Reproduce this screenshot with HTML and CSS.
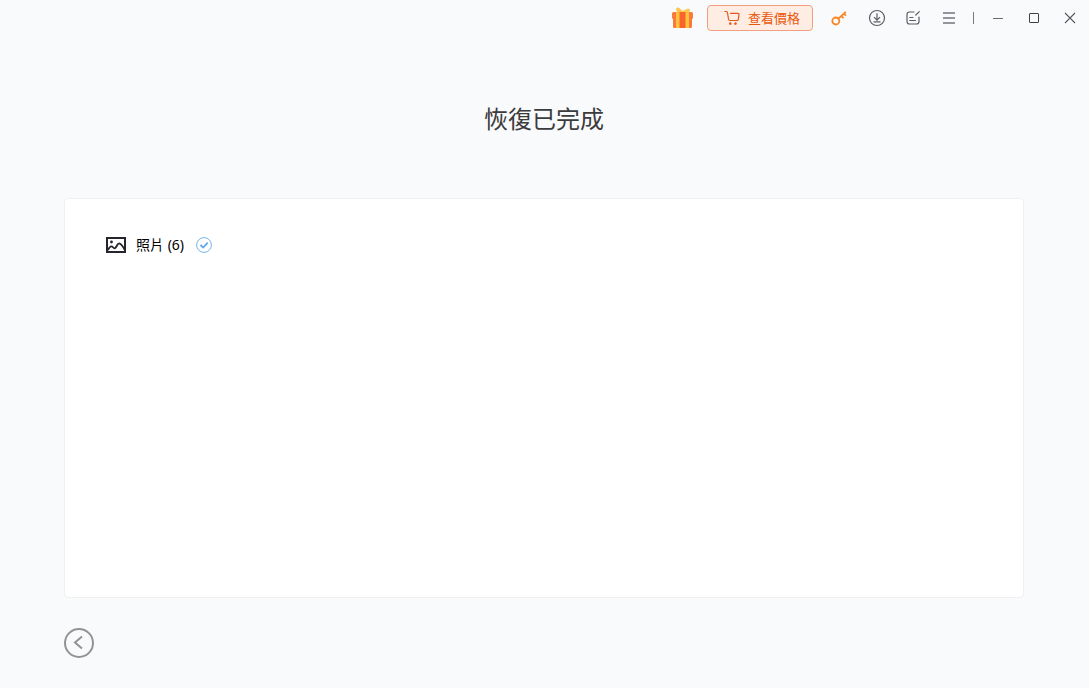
FILE: index.html
```html
<!DOCTYPE html>
<html lang="zh-Hant">
<head>
<meta charset="utf-8">
<meta name="viewport" content="width=device-width, initial-scale=1">
<title>恢復已完成</title>
<link rel="stylesheet" href="styles.css">
</head>
<body>
<div class="app">
  <header class="titlebar">
    <button class="tool gift" type="button" aria-label="Gift">
      <svg width="22" height="22" viewBox="0 0 22 22">
        <path d="M10 6C6 6.500 3.600 4.500 4.200 1.800C4.600 .2 6.400 0 7.500 1.200L10.500 4L15 2C17.300 1.200 18.600 2.600 17.800 4C16.800 5.600 14 6.500 10 6Z" fill="#ffc64a"/>
        <rect x="0" y="5" width="21" height="7" rx="1.500" fill="#fb7a3c"/>
        <rect x="1" y="10" width="19" height="11" rx="1.500" fill="#fa7a38"/>
        <path d="M7 5h7v16h-7z" fill="#f8642c"/>
        <path d="M4 5h3.500v16h-3.500zM13.500 5h3.500v16h-3.500z" fill="#ffc23e"/>
      </svg>
    </button>
    <button class="price" type="button">
      <svg width="16" height="16" viewBox="0 0 16 16" fill="none" stroke="#e4581c" stroke-width="1.200" stroke-linecap="round" stroke-linejoin="round">
        <path d="M.8 1.500H2.200Q3.200 1.500 3.400 2.500L4.600 9.500Q4.800 10.500 5.800 10.500H13.200Q14.200 10.500 14.300 9.500L15 4.300Q15 3.300 14 3.300H6.500"/>
        <circle cx="6.300" cy="13.600" r=".7" fill="#e4581c"/>
        <circle cx="11.500" cy="13.600" r=".7" fill="#e4581c"/>
      </svg>
      <span>查看價格</span>
    </button>
    <button class="tool key" type="button" aria-label="Key">
      <svg width="16" height="16" viewBox="0 0 16 16" fill="none" stroke="#fb8520" stroke-width="1.800">
        <circle cx="4.800" cy="11" r="3.500"/>
        <path d="M7.400 8.600L14.800 1.800M10.300 6L12.600 8.200M12.900 3.600L15 5.600"/>
      </svg>
    </button>
    <button class="tool" type="button" aria-label="Download">
      <svg width="18" height="18" viewBox="0 0 18 18" fill="none" stroke="#5a5d63" stroke-width="1.200">
        <circle cx="9" cy="9" r="7.500"/>
        <path d="M9 4.200V11M6 8.200L9 11.200L12 8.200M5.500 12.800H12.500"/>
      </svg>
    </button>
    <button class="tool" type="button" aria-label="Feedback">
      <svg width="16" height="16" viewBox="0 0 16 16" fill="none" stroke="#5a5d63" stroke-width="1.200" stroke-linecap="round">
        <path d="M9 2H4.500Q2 2 2 4.500V11.500Q2 14 4.500 14H11.500Q14 14 14 11.500V7M10.800 5L14.300 1.600M4.800 7.500H8M4.800 10.500H10.500"/>
      </svg>
    </button>
    <button class="tool" type="button" aria-label="Menu">
      <svg width="14" height="14" viewBox="0 0 14 14" fill="none" stroke="#73767b" stroke-width="1.400">
        <path d="M1 2H13M1 7H13M1 12H13"/>
      </svg>
    </button>
    <span class="divider"></span>
    <button class="tool" type="button" aria-label="Minimize">
      <svg width="12" height="12" viewBox="0 0 12 12" fill="none" stroke="#6a6c70"><path d="M1 6.500H11"/></svg>
    </button>
    <button class="tool" type="button" aria-label="Maximize">
      <svg width="12" height="12" viewBox="0 0 12 12" fill="none" stroke="#3f4145"><rect x="1.500" y="1.500" width="9" height="9" rx=".5"/></svg>
    </button>
    <button class="tool" type="button" aria-label="Close">
      <svg width="12" height="12" viewBox="0 0 12 12" fill="none" stroke="#55585d" stroke-width="1.100"><path d="M1 1L11 11M11 1L1 11"/></svg>
    </button>
  </header>
  <main class="content">
    <h1 class="title">恢復已完成</h1>
    <section class="panel">
      <div class="result">
        <svg width="20" height="16" viewBox="0 0 20 16" fill="none" stroke="#24262b" stroke-width="2">
          <rect x="1" y="1" width="18" height="14"/>
          <path d="M2 13C4 9 5.500 8.500 7.200 10.500C8.500 12 9.500 11.500 11 8.500C12.800 5 15 6 18.500 12.500" stroke-width="1.800"/>
          <circle cx="5.500" cy="5" r="1.400" fill="#24262b" stroke="none"/>
        </svg>
        <span class="label">照片 (6)</span>
        <svg width="16" height="16" viewBox="0 0 16 16" fill="none" stroke="#76b6ee">
          <circle cx="8" cy="8" r="7.400"/>
          <path d="M4.500 8L7.200 10.500L11.700 5.700" stroke="#5ea8ec" stroke-width="1.800"/>
        </svg>
      </div>
    </section>
  </main>
  <footer class="footer">
    <button class="back" type="button" aria-label="Back">
      <svg width="30" height="30" viewBox="0 0 30 30" fill="none" stroke="#929395" stroke-width="2">
        <circle cx="15" cy="15" r="14"/>
        <path d="M18 8.500L11 14.500L18 20.500"/>
      </svg>
    </button>
  </footer>
</div>
</body>
</html>
```
FILE: styles.css
```css
* {
  box-sizing: border-box;
}

body {
  margin: 0;
  background: #f9fafc;
  color: #000;
  font-family: "Noto Sans", "Noto Sans CJK TC", sans-serif;
}

button {
  margin: 0;
  padding: 0;
  border: 0;
  background: none;
  font: inherit;
  cursor: pointer;
}

svg {
  display: block;
  flex: none;
}

.app {
  display: flex;
  flex-direction: column;
  min-height: 100vh;
}

.titlebar {
  display: flex;
  align-items: center;
  justify-content: flex-end;
  height: 36px;
  padding-right: 1px;
}

.tool {
  display: flex;
  align-items: center;
  justify-content: center;
  width: 36px;
  height: 36px;
}

.gift {
  margin-right: 6px;
}

.key {
  margin-right: 2px;
}

.price {
  display: flex;
  align-items: center;
  justify-content: center;
  gap: 8px;
  height: 26px;
  margin-right: 8px;
  padding: 0 12px 0 16px;
  border: 1px solid #f0a080;
  border-radius: 4px;
  background: #ffece3;
  color: #e8590c;
  font-family: "Noto Sans CJK TC", sans-serif;
  font-size: 13px;
  line-height: 24px;
}

.divider {
  width: 1px;
  height: 12px;
  margin: 0 6px;
  background: #77797d;
}

.content {
  display: flex;
  flex: 1;
  flex-direction: column;
  padding: 0 65px 0 64px;
}

.title {
  margin: 64px 0 62px;
  color: #3c3c3c;
  font-family: "Noto Sans CJK TC", sans-serif;
  font-size: 24px;
  font-weight: 400;
  line-height: 36px;
  text-align: center;
}

.panel {
  flex: 1;
  padding: 36px 41px;
  border: 1px solid #eff0f2;
  border-radius: 4px;
  background: #fff;
}

.result {
  display: flex;
  align-items: center;
  gap: 10px;
}

.label {
  margin-right: 2px;
  font-size: 14px;
  line-height: 20px;
}

.footer {
  padding: 30px 64px;
}

.back {
  display: block;
  border-radius: 50%;
}
```
